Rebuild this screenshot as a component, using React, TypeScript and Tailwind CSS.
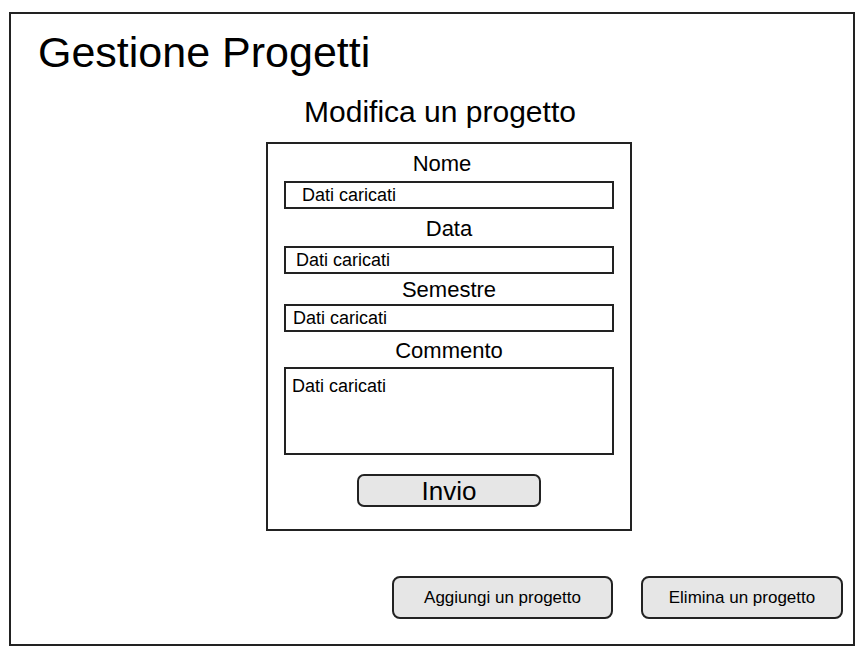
export default function App() {
  const field = 'mx-4 h-[28px] border-2 border-[#222] flex items-center text-[18px] leading-[20px]'
  const label = 'text-center text-[22px] leading-[26px]'

  return (
    <div className="w-[866px] h-[654px] bg-white pl-[9px] pt-[12px] text-black font-['Liberation_Sans',Arial,sans-serif]">
      <div className="w-[846px] h-[634px] border-2 border-[#222] flex flex-col">
        <h1 className="ml-[27px] mt-[13px] text-[43px] leading-[50px] font-normal">Gestione Progetti</h1>

        <h2 className="mt-[17px] pl-[16px] text-center text-[30px] leading-[36px] font-normal">
          Modifica un progetto
        </h2>

        <form className="ml-[255px] mt-[12px] w-[366px] h-[389px] border-2 border-[#222] flex flex-col">
          <div className={`${label} mt-[7px] pr-[14px]`}>Nome</div>
          <div className={`${field} mt-[4px] pl-[16px]`}>Dati caricati</div>

          <div className={`${label} mt-[7px]`}>Data</div>
          <div className={`${field} mt-[4px] pl-[10px]`}>Dati caricati</div>

          <div className={`${label} mt-[3px]`}>Semestre</div>
          <div className={`${field} mt-[1px] pl-[7px]`}>Dati caricati</div>

          <div className={`${label} mt-[6px]`}>Commento</div>
          <div className="mx-4 mt-[3px] h-[88px] border-2 border-[#222] pl-[6px] pt-[7px] text-[18px] leading-[20px]">
            Dati caricati
          </div>

          <button
            type="button"
            className="mx-auto mt-[19px] w-[184px] h-[33px] rounded-[7px] border-2 border-[#222] bg-[#e6e6e6] text-[26px] leading-[30px]"
          >
            Invio
          </button>
        </form>

        <div className="mt-auto mb-[25px] mr-[10px] flex justify-end gap-[28px]">
          <button
            type="button"
            className="w-[221px] h-[43px] rounded-[8px] border-2 border-[#222] bg-[#e6e6e6] text-[17px]"
          >
            Aggiungi un progetto
          </button>
          <button
            type="button"
            className="w-[202px] h-[43px] rounded-[8px] border-2 border-[#222] bg-[#e6e6e6] text-[17px]"
          >
            Elimina un progetto
          </button>
        </div>
      </div>
    </div>
  )
}
